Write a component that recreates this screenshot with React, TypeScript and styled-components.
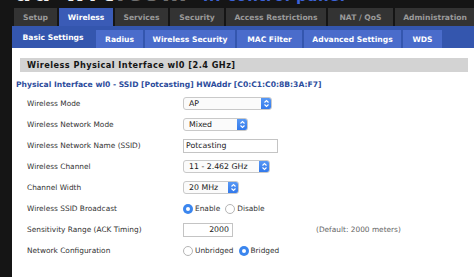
import styled, { createGlobalStyle } from "styled-components";

const Global = createGlobalStyle`
  html, body {
    margin: 0;
    padding: 0;
    background: #151515;
  }
  body {
    font-family: "DejaVu Sans", Verdana, sans-serif;
  }
`;

const Page = styled.div`
  width: 474px;
  height: 277px;
  overflow: hidden;
  background: #151515;
  display: flex;
  flex-direction: column;
`;

const Header = styled.div`
  height: 8px;
  overflow: hidden;
  display: flex;
  align-items: flex-start;
  padding-left: 14px;
  gap: 14px;
`;

const Logo = styled.div`
  font-family: "DejaVu Sans", sans-serif;
  font-weight: bold;
  font-size: 24px;
  line-height: 24px;
  margin-top: -19px;
  color: #f2f2f2;
  letter-spacing: 2px;
  white-space: nowrap;
  span {
    color: #6f6f6f;
  }
`;

const Tagline = styled.div`
  font-size: 15px;
  line-height: 15px;
  margin-top: -11px;
  color: #3d63d8;
  font-weight: bold;
  letter-spacing: 0.5px;
  white-space: nowrap;
`;

const Nav = styled.div`
  display: flex;
  gap: 2px;
  padding-left: 14px;
  height: 18px;
`;

const Tab = styled.div<{ $active?: boolean; $w: number }>`
  width: ${(p) => p.$w}px;
  flex-shrink: 0;
  display: flex;
  align-items: center;
  justify-content: center;
  background: ${(p) => (p.$active ? "#3a5bb6" : "#333333")};
  color: ${(p) => (p.$active ? "#ffffff" : "#9a9a9a")};
  font-size: 7.6px;
  font-weight: bold;
  white-space: nowrap;
`;

const Panel = styled.div`
  margin-left: 12px;
  flex: 1;
  background: #ffffff;
  display: flex;
  flex-direction: column;
`;

const SubBar = styled.div`
  height: 22px;
  background: #3456ae;
  display: flex;
  align-items: flex-end;
  gap: 2px;
`;

const SubTab = styled.div<{ $active?: boolean; $w: number }>`
  width: ${(p) => p.$w}px;
  height: ${(p) => (p.$active ? 22 : 18)}px;
  flex-shrink: 0;
  display: flex;
  align-items: center;
  justify-content: center;
  background: ${(p) => (p.$active ? "#3456ae" : "#4a6ccb")};
  color: #ffffff;
  font-size: 7.6px;
  font-weight: bold;
  white-space: nowrap;
`;

const Content = styled.div`
  padding: 10px 6px 0 4px;
  display: flex;
  flex-direction: column;
`;

const SectionTitle = styled.div`
  margin-left: 4px;
  height: 14px;
  background: #d3d3d3;
  display: flex;
  align-items: center;
  padding-left: 7px;
  font-size: 8.2px;
  font-weight: bold;
  letter-spacing: 0.45px;
  color: #151515;
`;

const Subtitle = styled.div`
  margin-top: 5px;
  height: 14px;
  display: flex;
  align-items: center;
  font-size: 7.6px;
  font-weight: bold;
  color: #2c4c9c;
  white-space: nowrap;
`;

const Form = styled.div`
  margin-top: 2px;
  padding-left: 11px;
  display: flex;
  flex-direction: column;
`;

const Row = styled.div`
  height: 21px;
  display: grid;
  grid-template-columns: 156px 1fr;
  align-items: center;
`;

const Label = styled.div`
  font-size: 7.4px;
  color: #333;
  white-space: nowrap;
`;

const Control = styled.div`
  display: flex;
  align-items: center;
  gap: 5px;
  font-size: 7.4px;
  color: #333;
`;

const Select = styled.div<{ $w: number }>`
  width: ${(p) => p.$w}px;
  height: 13px;
  box-sizing: border-box;
  border: 1px solid #c9c9c9;
  border-radius: 3px;
  background: #fbfbfb;
  display: flex;
  align-items: center;
  justify-content: space-between;
  padding-left: 5px;
  font-size: 7.8px;
  color: #222;
  overflow: hidden;
`;

const Stepper = styled.div`
  width: 11px;
  height: 13px;
  margin-right: -1px;
  background: linear-gradient(#5b9bf5, #2f76ea);
  border-radius: 0 3px 3px 0;
  display: flex;
  align-items: center;
  justify-content: center;
`;

const TextBox = styled.div<{ $w: number; $right?: boolean }>`
  width: ${(p) => p.$w}px;
  height: 14px;
  box-sizing: border-box;
  border: 1px solid #c4c4c4;
  background: #fff;
  display: flex;
  align-items: center;
  justify-content: ${(p) => (p.$right ? "flex-end" : "flex-start")};
  padding: 0 3px 0 2px;
  font-size: 7.8px;
  color: #222;
`;

const RadioOption = styled.label`
  display: flex;
  align-items: center;
  gap: 2px;
  font-size: 7.4px;
  color: #333;
`;

const RadioDot = styled.span<{ $on?: boolean }>`
  width: 10px;
  height: 10px;
  box-sizing: border-box;
  border-radius: 50%;
  border: ${(p) => (p.$on ? "none" : "1px solid #b5b5b5")};
  background: ${(p) => (p.$on ? "#3b86ee" : "#fff")};
  display: flex;
  align-items: center;
  justify-content: center;
  &::after {
    content: "";
    display: ${(p) => (p.$on ? "block" : "none")};
    width: 4px;
    height: 4px;
    border-radius: 50%;
    background: #fff;
  }
`;

const Hint = styled.span`
  margin-left: 78px;
  font-size: 7.4px;
  color: #666;
`;

const Arrows = () => (
  <svg width="7" height="9" viewBox="0 0 7 9">
    <path d="M1.5 3.5 L3.5 1.5 L5.5 3.5 M1.5 5.5 L3.5 7.5 L5.5 5.5" fill="none" stroke="#fff" strokeWidth="1.1" />
  </svg>
);

const Dropdown = ({ value, w }: { value: string; w: number }) => (
  <Select $w={w}>
    <span>{value}</span>
    <Stepper>
      <Arrows />
    </Stepper>
  </Select>
);

const Radio = ({ label, on }: { label: string; on?: boolean }) => (
  <RadioOption>
    <RadioDot $on={on} />
    {label}
  </RadioOption>
);

const tabs: [string, number, boolean?][] = [
  ["Setup", 43],
  ["Wireless", 54, true],
  ["Services", 53],
  ["Security", 54],
  ["Access Restrictions", 100],
  ["NAT / QoS", 65],
  ["Administration", 80],
];

const subTabs: [string, number, boolean?][] = [
  ["Basic Settings", 82, true],
  ["Radius", 47],
  ["Wireless Security", 90],
  ["MAC Filter", 65],
  ["Advanced Settings", 97],
  ["WDS", 39],
];

export default function App() {
  return (
    <Page>
      <Global />
      <Header>
        <Logo>
          dd-wrt<span>.com</span>
        </Logo>
        <Tagline>... control panel</Tagline>
      </Header>
      <Nav>
        {tabs.map(([t, w, a]) => (
          <Tab key={t} $w={w} $active={a}>
            {t}
          </Tab>
        ))}
      </Nav>
      <Panel>
        <SubBar>
          {subTabs.map(([t, w, a]) => (
            <SubTab key={t} $w={w} $active={a}>
              {t}
            </SubTab>
          ))}
        </SubBar>
        <Content>
          <SectionTitle>Wireless Physical Interface wl0 [2.4 GHz]</SectionTitle>
          <Subtitle>Physical Interface wl0 - SSID [Potcasting] HWAddr [C0:C1:C0:8B:3A:F7]</Subtitle>
          <Form>
            <Row>
              <Label>Wireless Mode</Label>
              <Control>
                <Dropdown value="AP" w={89} />
              </Control>
            </Row>
            <Row>
              <Label>Wireless Network Mode</Label>
              <Control>
                <Dropdown value="Mixed" w={65} />
              </Control>
            </Row>
            <Row>
              <Label>Wireless Network Name (SSID)</Label>
              <Control>
                <TextBox $w={95}>Potcasting</TextBox>
              </Control>
            </Row>
            <Row>
              <Label>Wireless Channel</Label>
              <Control>
                <Dropdown value="11 - 2.462 GHz" w={87} />
              </Control>
            </Row>
            <Row>
              <Label>Channel Width</Label>
              <Control>
                <Dropdown value="20 MHz" w={56} />
              </Control>
            </Row>
            <Row>
              <Label>Wireless SSID Broadcast</Label>
              <Control>
                <Radio label="Enable" on />
                <Radio label="Disable" />
              </Control>
            </Row>
            <Row>
              <Label>Sensitivity Range (ACK Timing)</Label>
              <Control>
                <TextBox $w={50} $right>
                  2000
                </TextBox>
                <Hint>(Default: 2000 meters)</Hint>
              </Control>
            </Row>
            <Row>
              <Label>Network Configuration</Label>
              <Control>
                <Radio label="Unbridged" />
                <Radio label="Bridged" on />
              </Control>
            </Row>
          </Form>
        </Content>
      </Panel>
    </Page>
  );
}
